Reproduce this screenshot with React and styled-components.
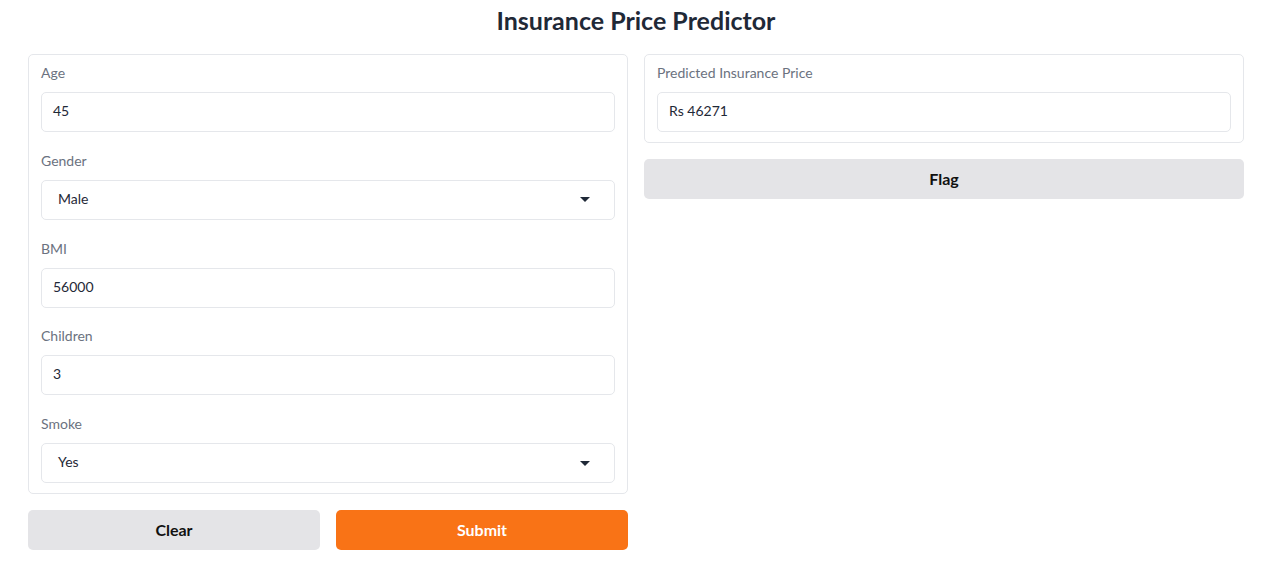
import React from 'react';
import styled, { createGlobalStyle } from 'styled-components';

const GlobalStyle = createGlobalStyle`
  *, *::before, *::after {
    box-sizing: border-box;
  }
  body {
    margin: 0;
    background: #ffffff;
    font-family: Lato, "Noto Sans", sans-serif;
    color: #1f2937;
  }
`;

const Page = styled.div`
  width: 1216px;
  margin-left: 28px;
  padding-top: 3px;
`;

const Title = styled.h1`
  margin: 0 0 17px;
  height: 34px;
  line-height: 34px;
  text-align: center;
  font-size: 25px;
  font-weight: 700;
  color: #1f2937;
`;

const Columns = styled.div`
  display: grid;
  grid-template-columns: 1fr 1fr;
  gap: 16px;
  align-items: start;
`;

const Column = styled.div`
  display: flex;
  flex-direction: column;
  gap: 16px;
`;

const Panel = styled.div`
  border: 1px solid #e5e7eb;
  border-radius: 5px;
  padding: 9px 12px 10px;
  display: flex;
  flex-direction: column;
  gap: 19.75px;
`;

const Field = styled.div`
  display: flex;
  flex-direction: column;
`;

const Label = styled.span`
  font-size: 14px;
  line-height: 20px;
  color: #6b7280;
  margin-bottom: 8px;
  position: relative;
  top: -1px;
`;

const Box = styled.div`
  height: 40px;
  border: 1px solid #e5e7eb;
  border-radius: 5px;
  display: flex;
  align-items: center;
  justify-content: space-between;
  padding: 0 ${(p) => (p.$select ? '24px 3px 16px' : '11px 3px')};
  font-size: 14px;
  color: #1f2937;
`;

const Caret = styled.span`
  width: 0;
  height: 0;
  margin-top: 3px;
  border-left: 5px solid transparent;
  border-right: 5px solid transparent;
  border-top: 5px solid #1f2937;
`;

const ButtonRow = styled.div`
  display: grid;
  grid-template-columns: 1fr 1fr;
  gap: 16px;
`;

const Button = styled.button`
  height: 40px;
  border: none;
  border-radius: 5px;
  padding: 0 0 2px;
  background: ${(p) => (p.$primary ? '#f97316' : '#e4e4e7')};
  color: ${(p) => (p.$primary ? '#ffffff' : '#111111')};
  font-family: inherit;
  font-size: 16px;
  font-weight: 700;
  cursor: pointer;
`;

function TextField({ label, value }) {
  return (
    <Field>
      <Label>{label}</Label>
      <Box>{value}</Box>
    </Field>
  );
}

function SelectField({ label, value }) {
  return (
    <Field>
      <Label>{label}</Label>
      <Box $select>
        <span>{value}</span>
        <Caret />
      </Box>
    </Field>
  );
}

export default function App() {
  return (
    <Page>
      <GlobalStyle />
      <Title>Insurance Price Predictor</Title>
      <Columns>
        <Column>
          <Panel>
            <TextField label="Age" value="45" />
            <SelectField label="Gender" value="Male" />
            <TextField label="BMI" value="56000" />
            <TextField label="Children" value="3" />
            <SelectField label="Smoke" value="Yes" />
          </Panel>
          <ButtonRow>
            <Button>Clear</Button>
            <Button $primary>Submit</Button>
          </ButtonRow>
        </Column>
        <Column>
          <Panel>
            <TextField label="Predicted Insurance Price" value="Rs 46271" />
          </Panel>
          <Button>Flag</Button>
        </Column>
      </Columns>
    </Page>
  );
}
